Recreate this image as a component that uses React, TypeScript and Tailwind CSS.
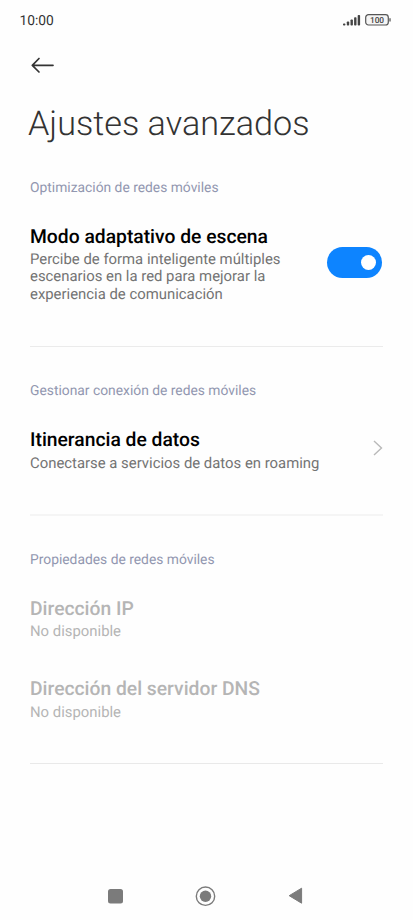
import React from "react";

function Label({ children }: { children: React.ReactNode }) {
  return <h2 className="h-5 text-[13.83px] leading-5 whitespace-nowrap text-[#9297b0]">{children}</h2>;
}

function Title({ children }: { children: React.ReactNode }) {
  return <h3 className="h-[27px] text-[19.3px] leading-[27px] font-medium whitespace-nowrap">{children}</h3>;
}

function Divider({ className }: { className: string }) {
  return <div className={`w-[353px] shrink-0 ${className}`} />;
}

export default function App() {
  return (
    <div className="flex h-[920px] w-[413px] flex-col overflow-hidden bg-[#fefefe] font-['Roboto',sans-serif] text-black [text-rendering:geometricPrecision]">
      <header className="flex h-10 shrink-0 items-center justify-between pr-[22px] pl-[19.5px]">
        <span className="mt-[2px] text-[13.8px] leading-5 font-[450] text-[#333]">10:00</span>
        <div className="flex items-center gap-1">
          <svg width="19" height="12" viewBox="0 0 19 12" fill="#444">
            <rect x="1" y="9.4" width="2.4" height="2.2" rx="0.8" />
            <rect x="4.8" y="7.5" width="2.4" height="4.1" rx="0.8" />
            <rect x="8.5" y="5.4" width="2.4" height="6.2" rx="0.8" />
            <rect x="12.1" y="3.2" width="2.4" height="8.4" rx="0.8" />
            <rect x="15.7" y="1" width="2.4" height="10.6" rx="0.8" />
          </svg>
          <svg width="26" height="12" viewBox="0 0 26 12">
            <rect x="0.7" y="0.7" width="22.6" height="10.3" rx="2.8" fill="#f5f5f5" stroke="#555" strokeWidth="1.2" />
            <path d="M25 4.2v3.4" stroke="#555" strokeWidth="1.3" />
            <text x="12" y="8.8" textAnchor="middle" fontFamily="Roboto" fontSize="8.3" fontWeight="500" fill="#444">100</text>
          </svg>
        </div>
      </header>
      <div className="flex h-[50px] shrink-0 items-center pl-[31px]">
        <svg width="24" height="18" viewBox="0 0 24 18" fill="none" stroke="#333" strokeWidth="1.7" strokeLinecap="round" strokeLinejoin="round">
          <path d="M8 2.5L1.3 9.3 8 16M1.3 9.3H22" />
        </svg>
      </div>
      <main className="flex flex-col pl-[30px]">
        <h1 className="mt-[10px] -ml-[2px] h-12 text-[34.2px] leading-[48px] font-light text-[#333]">Ajustes avanzados</h1>
        <div className="mt-[30px]"><Label>Optimización de redes móviles</Label></div>
        <div className="mt-[25px] flex h-[81px] justify-between pr-[31px]">
          <div>
            <Title>Modo adaptativo de escena</Title>
            <p className="mt-[0.7px] text-[14.88px] leading-[17.6px] whitespace-nowrap text-[#737373]">Percibe de forma inteligente múltiples<br />escenarios en la red para mejorar la<br />experiencia de comunicación</p>
          </div>
          <div className="mt-6 flex h-[30.5px] w-[55px] items-center justify-end rounded-full bg-[#0d84ff] pr-[6px]">
            <span className="size-[15px] rounded-full bg-white" />
          </div>
        </div>
        <div className="mt-[42px]"><Divider className="h-px bg-[#ebebeb]" /></div>
        <div className="mt-[34px]"><Label>Gestionar conexión de redes móviles</Label></div>
        <div className="mt-[25px] flex justify-between pr-[30px]">
          <div>
            <Title>Itinerancia de datos</Title>
            <p className="mt-px text-[14.88px] leading-[18px] text-[#737373]">Conectarse a servicios de datos en roaming</p>
          </div>
          <svg className="mt-[14px]" width="10" height="16" viewBox="0 0 10 16" fill="none" stroke="#b9b9b9" strokeWidth="1.4"><path d="M1 1l7.5 7L1 15" /></svg>
        </div>
        <div className="mt-[42px]"><Divider className="h-[2px] bg-[#f5f5f5]" /></div>
        <div className="mt-[34px]"><Label>Propiedades de redes móviles</Label></div>
        <div className="mt-[25px] text-[#b5b5b5]">
          <Title>Dirección IP</Title>
          <p className="text-[14.88px] leading-[18px]">No disponible</p>
        </div>
        <div className="mt-[35px] text-[#b5b5b5]">
          <Title>Dirección del servidor DNS</Title>
          <p className="mt-px text-[14.88px] leading-[18px]">No disponible</p>
        </div>
        <div className="mt-[42px]"><Divider className="h-px bg-[#e9e9e9]" /></div>
      </main>
      <nav className="mt-auto flex h-12 shrink-0 items-center pl-[108px]">
        <svg width="15" height="15" viewBox="0 0 15 15"><rect width="15" height="14.5" rx="2.5" fill="#7b7b7b" /></svg>
        <svg className="ml-[72px]" width="21" height="21" viewBox="0 0 21 21"><circle cx="10.5" cy="10.2" r="9.2" fill="none" stroke="#7b7b7b" strokeWidth="1.4" /><circle cx="10.5" cy="10.2" r="5.7" fill="#7b7b7b" /></svg>
        <svg className="ml-[72px]" width="15" height="18" viewBox="0 0 15 18"><path d="M1.2 8.7L13.6 1.2v15z" fill="#7b7b7b" stroke="#7b7b7b" strokeWidth="1" strokeLinejoin="round" /></svg>
      </nav>
    </div>
  );
}
